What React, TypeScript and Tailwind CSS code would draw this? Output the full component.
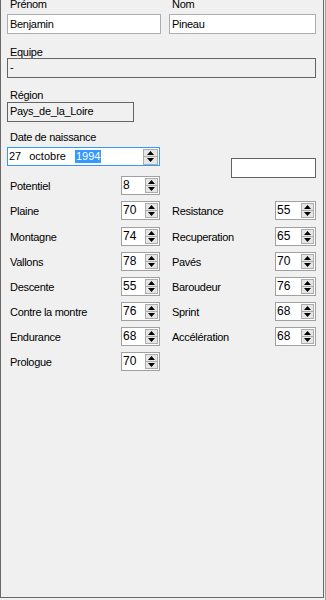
import type { ReactNode } from 'react';

const font = "font-['Liberation_Sans',Arial,sans-serif]";

const rows: { left: [string, string]; right?: [string, string] }[] = [
  { left: ['Plaine', '70'], right: ['Resistance', '55'] },
  { left: ['Montagne', '74'], right: ['Recuperation', '65'] },
  { left: ['Vallons', '78'], right: ['Pavés', '70'] },
  { left: ['Descente', '55'], right: ['Baroudeur', '76'] },
  { left: ['Contre la montre', '76'], right: ['Sprint', '68'] },
  { left: ['Endurance', '68'], right: ['Accélération', '68'] },
  { left: ['Prologue', '70'] },
];

function Label({ children, className = '' }: { children: ReactNode; className?: string }) {
  return (
    <span className={`block h-[12px] text-[11px] leading-[12px] tracking-[-0.3px] text-black whitespace-nowrap ${className}`}>
      {children}
    </span>
  );
}

function Arrow({ up }: { up?: boolean }) {
  return (
    <svg width="7" height="4" viewBox="0 0 7 4" className="block">
      <path d={up ? 'M3.5 0L7 4H0z' : 'M0 0H7L3.5 4z'} fill="#000" />
    </svg>
  );
}

function Spin({ big }: { big?: boolean }) {
  return (
    <div className={`flex flex-col border border-[#acacac] bg-[#e6e6e6] ${big ? 'w-[15px] h-[16px]' : 'w-[13px] h-[15px]'}`}>
      <div className="flex-1 flex items-center justify-center border-b border-[#acacac]">
        <Arrow up />
      </div>
      <div className="flex-1 flex items-center justify-center">
        <Arrow />
      </div>
    </div>
  );
}

function NumField({ value, w }: { value: string; w: string }) {
  return (
    <div className={`flex h-[19px] ${w} border border-[#a0a0a0] bg-white`}>
      <span className="flex-1 pl-[1px] pt-[1px] text-[12px] leading-[14px] text-black">{value}</span>
      <div className="pt-[1px] pr-[1px]">
        <Spin />
      </div>
    </div>
  );
}

export default function App() {
  return (
    <div className={`w-[326px] h-[600px] bg-[#f0f0f0] flex border-r border-[#a0a0a0] overflow-hidden ${font}`}>
      <div className="w-[324px] h-[598px] border-l border-r border-b border-[#696969] flex flex-col">
        <div className="flex -mt-[2px]">
          <Label className="ml-[9px] w-[162px]">Prénom</Label>
          <Label>Nom</Label>
        </div>
        <div className="flex mt-[4px]">
          <div className="ml-[6px] w-[154px] h-[20px] border border-[#abadb3] bg-white pl-[2px] text-[11px] leading-[18px] tracking-[-0.3px]">
            Benjamin
          </div>
          <div className="ml-[8px] w-[147px] h-[20px] border border-[#abadb3] bg-white pl-[2px] text-[11px] leading-[18px] tracking-[-0.3px]">
            Pineau
          </div>
        </div>

        <Label className="mt-[12px] ml-[9px]">Equipe</Label>
        <div className="ml-[6px] w-[309px] h-[20px] border border-[#646464] pl-[2px] text-[11px] leading-[16px]">-</div>

        <Label className="mt-[11px] ml-[9px]">Région</Label>
        <div className="mt-[1px] ml-[6px] w-[127px] h-[20px] border border-[#646464] pl-[2px] text-[11px] leading-[16px] tracking-[-0.3px]">
          Pays_de_la_Loire
        </div>

        <Label className="mt-[9px] ml-[9px]">Date de naissance</Label>
        <div className="flex items-start mt-[4px]">
          <div className="ml-[6px] w-[153px] h-[19px] border border-[#3399ff] bg-white flex items-center pl-[1px]">
            <span className="text-[11px] leading-[13px]">27</span>
            <span className="ml-[8px] text-[11px] leading-[13px]">octobre</span>
            <span className="ml-[9px] bg-[#3399ff] text-white text-[11px] leading-[13px] px-px">1994</span>
            <div className="ml-auto pr-[1px]">
              <Spin big />
            </div>
          </div>
          <div className="ml-[71px] mt-[11px] -mb-[12px] w-[85px] h-[20px] border border-[#646464] bg-white" />
        </div>

        <div className="flex items-center mt-[10px] w-[159px]">
          <Label className="ml-[9px] w-[111px] mt-[1px]">Potentiel</Label>
          <NumField value="8" w="w-[39px]" />
        </div>

        {rows.map((r, i) => (
          <div key={r.left[0]} className={`flex items-center ${i === 1 ? 'mt-[7px]' : 'mt-[6px]'}`}>
            <div className="flex items-center w-[159px]">
              <Label className="ml-[9px] w-[111px] mt-[1px]">{r.left[0]}</Label>
              <NumField value={r.left[1]} w="w-[39px]" />
            </div>
            {r.right && (
              <div className="flex items-center ml-[12px]">
                <Label className="w-[103px] mt-[1px]">{r.right[0]}</Label>
                <NumField value={r.right[1]} w="w-[41px]" />
              </div>
            )}
          </div>
        ))}
      </div>
    </div>
  );
}
